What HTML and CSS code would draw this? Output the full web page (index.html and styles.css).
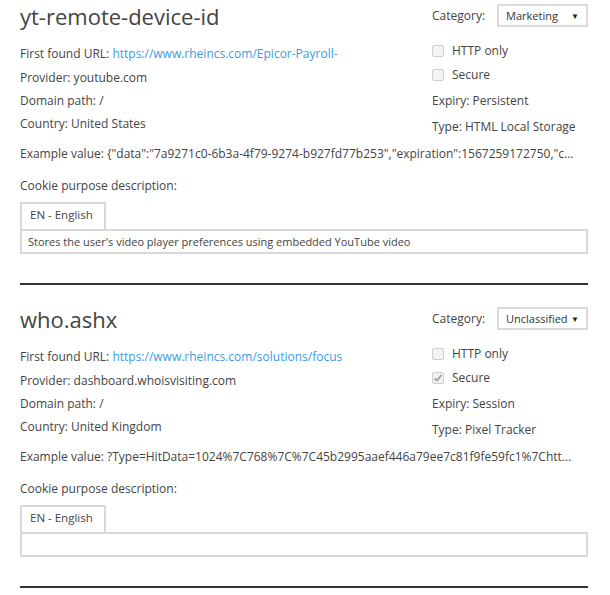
FILE: index.html
```html
<!DOCTYPE html>
<html>
<head>
<meta charset="utf-8">
<link rel="stylesheet" href="styles.css">
</head>
<body>
<div class="list">
  <section class="cookie">
    <div class="top">
      <div class="left">
        <h2 class="name">yt-remote-device-id</h2>
        <div class="row first">First found URL: <a class="link" href="#">https://www.rheincs.com/Epicor-Payroll-</a></div>
        <div class="row">Provider: youtube.com</div>
        <div class="row">Domain path: /</div>
        <div class="row">Country: United States</div>
      </div>
      <div class="right">
        <div class="cat">
          <span class="cat-label">Category:</span>
          <div class="select"><span>Marketing</span><span class="arrow">▼</span></div>
        </div>
        <div class="check"><span class="box"></span>HTTP only</div>
        <div class="check"><span class="box"></span>Secure</div>
        <div class="row expiry">Expiry: Persistent</div>
        <div class="row type">Type: HTML Local Storage</div>
      </div>
    </div>
    <div class="example">Example value: {"data":"7a9271c0-6b3a-4f79-9274-b927fd77b253","expiration":1567259172750,"c...</div>
    <div class="purpose">Cookie purpose description:</div>
    <div class="tabs">
      <div class="tab">EN - English</div>
    </div>
    <div class="panel">Stores the user's video player preferences using embedded YouTube video</div>
    <hr class="divider">
  </section>

  <section class="cookie">
    <div class="top">
      <div class="left">
        <h2 class="name">who.ashx</h2>
        <div class="row first">First found URL: <a class="link" href="#">https://www.rheincs.com/solutions/focus</a></div>
        <div class="row">Provider: dashboard.whoisvisiting.com</div>
        <div class="row">Domain path: /</div>
        <div class="row">Country: United Kingdom</div>
      </div>
      <div class="right">
        <div class="cat">
          <span class="cat-label">Category:</span>
          <div class="select"><span>Unclassified</span><span class="arrow">▼</span></div>
        </div>
        <div class="check"><span class="box"></span>HTTP only</div>
        <div class="check"><span class="box"><svg width="10" height="10" viewBox="0 0 10 10"><path d="M1.6 5.3 L4 7.5 L8.5 2" fill="none" stroke="#9c9c9c" stroke-width="1.8"/></svg></span>Secure</div>
        <div class="row expiry">Expiry: Session</div>
        <div class="row type">Type: Pixel Tracker</div>
      </div>
    </div>
    <div class="example">Example value: ?Type=HitData=1024%7C768%7C%7C45b2995aaef446a79ee7c81f9fe59fc1%7Chtt...</div>
    <div class="purpose">Cookie purpose description:</div>
    <div class="tabs">
      <div class="tab">EN - English</div>
    </div>
    <div class="panel"></div>
    <hr class="divider">
  </section>
</div>
</body>
</html>
```

FILE: styles.css
```css
html, body {
  margin: 0;
  padding: 0;
  background: #fff;
}
body {
  font-family: "Open Sans", "Noto Sans", sans-serif;
  font-size: 12px;
  color: #444;
}
.list {
  padding: 0 22px 0 20px;
}
.cookie {
  display: flex;
  flex-direction: column;
}
.top {
  display: flex;
}
.left {
  width: 330px;
  white-space: nowrap;
}
.right {
  margin-left: auto;
  width: 156px;
  white-space: nowrap;
}
.name {
  margin: 0;
  font-weight: 400;
  font-size: 22px;
  line-height: 32px;
  color: #444;
  padding-bottom: 9.5px;
}
.row {
  line-height: 23px;
  height: 23px;
}
.row.first {
  height: 24px;
  line-height: 24px;
}
.link {
  color: #3c9be0;
  text-decoration: none;
}
.cat {
  display: flex;
  align-items: center;
  padding-top: 4px;
  height: 23px;
  margin-bottom: 12px;
}
.cat-label {
  margin-right: auto;
}
.select {
  width: 91px;
  box-sizing: border-box;
  height: 23px;
  border: 2px solid #dadada;
  display: flex;
  align-items: center;
  justify-content: space-between;
  padding: 0 7px 0 7px;
  color: #333;
  font-size: 11px;
}
.arrow {
  font-size: 8px;
  color: #222;
}
.check {
  display: flex;
  align-items: center;
  line-height: 24px;
  height: 24px;
}
.check:first-of-type {
  margin-top: 1px;
}
.box {
  width: 10px;
  height: 10px;
  border: 1px solid #cfcfcf;
  border-radius: 2px;
  background: #f3f3f3;
  margin-right: 8px;
  display: flex;
  align-items: center;
  justify-content: center;
}
.expiry {
  margin-top: 1.5px;
}
.type {
  margin-top: 3px;
}
.example {
  margin-top: 4px;
  line-height: 23px;
  white-space: nowrap;
}
.purpose {
  margin-top: 9px;
  line-height: 23px;
}
.tabs {
  display: flex;
  margin-top: 5.5px;
}
.tab {
  border: 2px solid #d9d9d9;
  border-bottom: none;
  padding: 0 11px 0 8px;
  line-height: 22px;
  height: 27px;
  box-sizing: border-box;
  background: #fff;
  font-size: 11.5px;
}
.panel {
  border: 2px solid #d9d9d9;
  height: 25px;
  box-sizing: border-box;
  line-height: 21px;
  padding: 0 6px;
  white-space: nowrap;
  font-size: 11px;
}
.divider {
  margin: 29px 0 18px 0;
  border: none;
  border-top: 2px solid #333;
  height: 0;
}
```
